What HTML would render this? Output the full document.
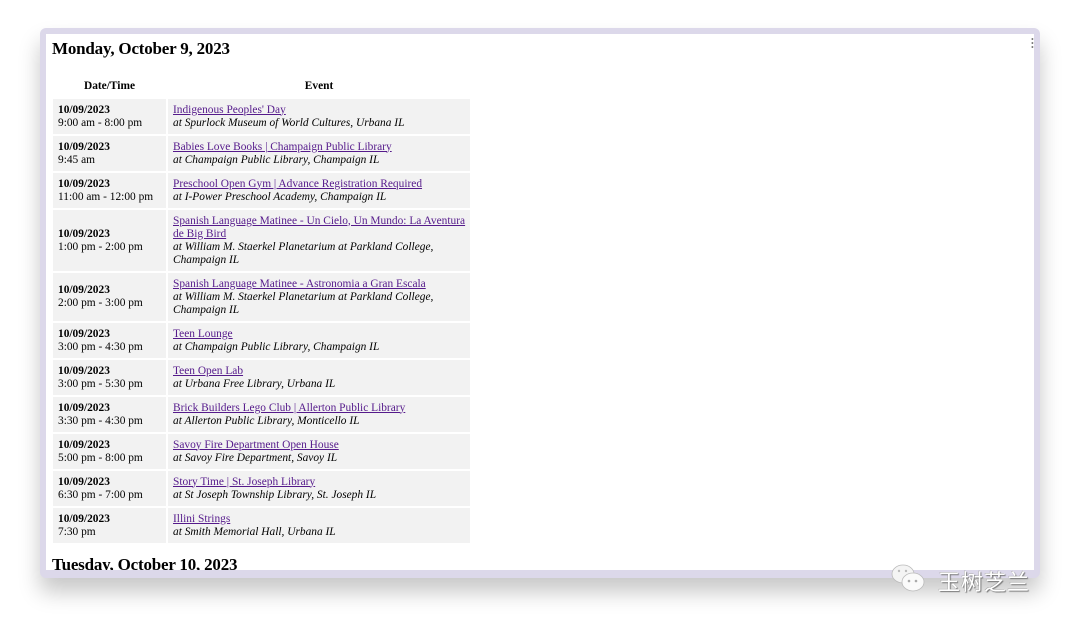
<!DOCTYPE html>
<html><head><meta charset="utf-8"><style>
html,body{margin:0;padding:0;width:1080px;height:628px;overflow:hidden;background:#fff}
.frame{position:absolute;left:40px;top:28px;width:1000px;height:550px;background:#dcd8ea;border-radius:6px;box-shadow:0 14px 22px rgba(0,0,0,0.22)}
.inner{position:absolute;left:46px;top:34px;width:988px;height:536px;background:#fff;overflow:hidden;font-family:"Liberation Serif",serif;color:#000}
h2{position:absolute;left:6px;top:5px;margin:0;font-size:17px;font-weight:bold;letter-spacing:-0.2px}
table{position:absolute;left:5px;top:39px;border-spacing:2px;font-size:11.4px;line-height:13px;white-space:nowrap}
th{font-weight:bold;padding:4px 5px;height:14px}
td{background:#f2f2f2;padding:4.5px 5px;vertical-align:middle}
td.d{width:103px}
td.e{width:292px}
a{color:#551a8b;text-decoration:underline}
i{font-style:italic}
.h3{top:521px}
.dots{position:absolute;right:0;top:4px;width:3px;font-size:8px;line-height:4px;color:#777}
</style></head><body>
<div class="frame"></div>
<div class="inner">
<h2>Monday, October 9, 2023</h2>
<table>
<tr><th>Date/Time</th><th>Event</th></tr>
<tr><td class="d"><b>10/09/2023</b><br>9:00 am - 8:00 pm</td><td class="e"><a>Indigenous Peoples' Day</a><br><i>at Spurlock Museum of World Cultures, Urbana IL</i></td></tr>
<tr><td class="d"><b>10/09/2023</b><br>9:45 am</td><td class="e"><a>Babies Love Books | Champaign Public Library</a><br><i>at Champaign Public Library, Champaign IL</i></td></tr>
<tr><td class="d"><b>10/09/2023</b><br>11:00 am - 12:00 pm</td><td class="e"><a>Preschool Open Gym | Advance Registration Required</a><br><i>at I-Power Preschool Academy, Champaign IL</i></td></tr>
<tr><td class="d"><b>10/09/2023</b><br>1:00 pm - 2:00 pm</td><td class="e"><a>Spanish Language Matinee - Un Cielo, Un Mundo: La Aventura<br>de Big Bird</a><br><i>at William M. Staerkel Planetarium at Parkland College,<br>Champaign IL</i></td></tr>
<tr><td class="d"><b>10/09/2023</b><br>2:00 pm - 3:00 pm</td><td class="e"><a>Spanish Language Matinee - Astronomia a Gran Escala</a><br><i>at William M. Staerkel Planetarium at Parkland College,<br>Champaign IL</i></td></tr>
<tr><td class="d"><b>10/09/2023</b><br>3:00 pm - 4:30 pm</td><td class="e"><a>Teen Lounge</a><br><i>at Champaign Public Library, Champaign IL</i></td></tr>
<tr><td class="d"><b>10/09/2023</b><br>3:00 pm - 5:30 pm</td><td class="e"><a>Teen Open Lab</a><br><i>at Urbana Free Library, Urbana IL</i></td></tr>
<tr><td class="d"><b>10/09/2023</b><br>3:30 pm - 4:30 pm</td><td class="e"><a>Brick Builders Lego Club | Allerton Public Library</a><br><i>at Allerton Public Library, Monticello IL</i></td></tr>
<tr><td class="d"><b>10/09/2023</b><br>5:00 pm - 8:00 pm</td><td class="e"><a>Savoy Fire Department Open House</a><br><i>at Savoy Fire Department, Savoy IL</i></td></tr>
<tr><td class="d"><b>10/09/2023</b><br>6:30 pm - 7:00 pm</td><td class="e"><a>Story Time | St. Joseph Library</a><br><i>at St Joseph Township Library, St. Joseph IL</i></td></tr>
<tr><td class="d"><b>10/09/2023</b><br>7:30 pm</td><td class="e"><a>Illini Strings</a><br><i>at Smith Memorial Hall, Urbana IL</i></td></tr>
</table>
<h2 class="h3">Tuesday, October 10, 2023</h2>
<div class="dots">•<br>•<br>•</div>
</div>
<div style="position:absolute;left:890px;top:563px;width:40px;height:32px">
<svg width="40" height="32" viewBox="0 0 40 32"><ellipse cx="13" cy="11" rx="11" ry="9" fill="#f4f4f4" stroke="#bbb" stroke-width="0.8"/><ellipse cx="23" cy="19" rx="11" ry="9" fill="#fafafa" stroke="#bbb" stroke-width="0.8"/><circle cx="19" cy="18" r="1.3" fill="#aaa"/><circle cx="26" cy="18" r="1.3" fill="#aaa"/><circle cx="9" cy="8" r="1.2" fill="#bbb"/><circle cx="16" cy="8" r="1.2" fill="#bbb"/></svg></div>
<div style="position:absolute;left:938px;top:565px;font-family:'Liberation Sans','Noto Sans CJK SC',sans-serif;font-size:22px;color:#fff;text-shadow:1px 1px 1px #777,-0.5px -0.5px 0 #aaa;letter-spacing:1px">玉树芝兰</div>
</body></html>
